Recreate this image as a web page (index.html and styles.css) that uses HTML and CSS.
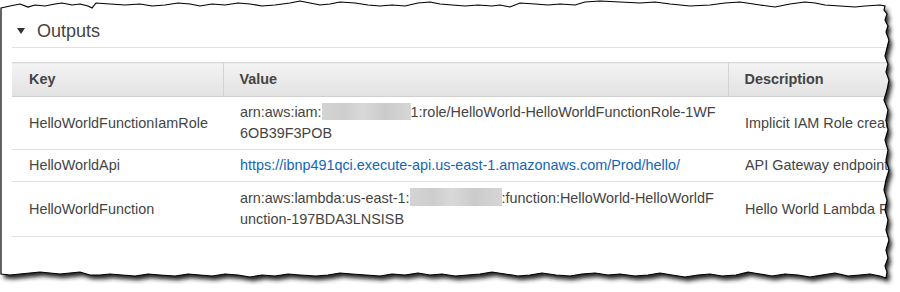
FILE: index.html
```html
<!DOCTYPE html>
<html lang="en">
<head>
<meta charset="utf-8">
<title>Outputs</title>
<link rel="stylesheet" href="styles.css">
</head>
<body>
<div class="paper">
  <section class="panel">
    <h2 class="title"><span class="caret"></span>Outputs</h2>
    <table class="outputs">
      <colgroup>
        <col class="c-key">
        <col class="c-value">
        <col class="c-desc">
      </colgroup>
      <thead>
        <tr><th>Key</th><th>Value</th><th>Description</th></tr>
      </thead>
      <tbody>
        <tr>
          <td>HelloWorldFunctionIamRole</td>
          <td class="val">arn:aws:iam:<span class="redact r1"></span>1:role/HelloWorld-HelloWorldFunctionRole-1WF6OB39F3POB</td>
          <td class="desc">Implicit IAM Role created for Hello World function</td>
        </tr>
        <tr>
          <td>HelloWorldApi</td>
          <td class="val"><a class="link" href="#">https://ibnp491qci.execute-api.us-east-1.amazonaws.com/Prod/hello/</a></td>
          <td class="desc">API Gateway endpoint URL for Prod stage for Hello World function</td>
        </tr>
        <tr>
          <td>HelloWorldFunction</td>
          <td class="val">arn:aws:lambda:us-east-1:<span class="redact r2"></span>:function:HelloWorld-HelloWorldFunction-197BDA3LNSISB</td>
          <td class="desc">Hello World Lambda Function ARN</td>
        </tr>
      </tbody>
    </table>
  </section>
  <svg class="edge" width="900" height="292" viewBox="0 0 900 292" aria-hidden="true">
    <defs>
      <path id="paperShape" d="M1 8 L10 6 L20 4 L28 7 L35 5 L45 6 L55 4 L62 3 L72 5 L80 4 L88 6 L92 8 L96 3 L110 4 L125 5 L140 4 L152 6 L165 5 L178 3 L190 4 L200 6 L212 4 L225 5 L238 3 L250 4 L262 6 L275 5 L290 3 L300 1 L310 3 L320 5 L330 4 L340 2 L355 3 L368 5 L380 6 L392 5 L405 6 L418 3 L430 2 L440 4 L452 5 L465 6 L478 5 L492 6 L500 5 L510 7 L520 3 L535 4 L548 5 L560 4 L575 5 L585 2 L600 1 L620 2 L640 3 L655 2 L670 4 L690 6 L710 5 L725 3 L740 2 L760 5 L775 7 L790 4 L805 2 L815 3 L825 5 L840 6 L855 7 L865 6 L880 5 L885 6 L884 10 L887 14 L885 20 L888 26 L886 32 L889 40 L887 48 L885 56 L888 64 L886 72 L889 80 L887 90 L884 100 L888 110 L886 120 L888 130 L885 140 L888 150 L886 160 L889 170 L886 180 L884 190 L887 200 L885 210 L888 220 L886 230 L889 240 L886 250 L888 258 L885 266 L887 272 L886 278 L880 276 L870 274 L860 275 L848 276 L835 273 L822 275 L810 277 L798 275 L785 274 L772 276 L760 274 L748 272 L736 275 L722 276 L710 274 L698 275 L685 277 L672 275 L660 273 L648 275 L635 276 L620 274 L608 275 L595 273 L582 274 L570 276 L556 275 L542 273 L530 275 L518 276 L505 274 L492 272 L480 274 L468 275 L455 276 L442 274 L430 275 L418 273 L405 275 L392 274 L380 276 L366 275 L352 274 L340 273 L328 275 L316 276 L300 275 L288 274 L275 276 L262 275 L250 277 L238 275 L225 274 L212 276 L200 275 L188 274 L175 276 L160 275 L148 274 L135 276 L122 275 L110 274 L100 275 L90 275 L80 272 L70 273 L60 274 L50 273 L40 272 L30 273 L20 274 L10 275 L1 274 Z"/>
      <mask id="outside" maskUnits="userSpaceOnUse" x="0" y="0" width="900" height="292">
        <rect x="0" y="0" width="900" height="292" fill="#fff"/>
        <use href="#paperShape" fill="#000"/>
      </mask>
      <filter id="blur" x="-10%" y="-10%" width="120%" height="120%">
        <feGaussianBlur stdDeviation="2.2"/>
      </filter>
    </defs>
    <rect x="0" y="0" width="900" height="292" fill="#fff" mask="url(#outside)"/>
    <g mask="url(#outside)">
      <use href="#paperShape" fill="#222" transform="translate(3 4)" filter="url(#blur)"/>
    </g>
    <use href="#paperShape" fill="none" stroke="#000" stroke-width="1.2"/>
  </svg>
</div>
</body>
</html>
```

FILE: styles.css
```css
html, body {
  margin: 0;
  padding: 0;
  background: #fff;
}

body {
  font-family: "Liberation Sans", Arial, sans-serif;
  color: #444;
}

.paper {
  position: relative;
  width: 900px;
  height: 292px;
  overflow: hidden;
  background: #fff;
}

.panel {
  width: 1000px;
  padding: 20px 0 0 12px;
}

.title {
  margin: 0;
  display: flex;
  align-items: center;
  gap: 12px;
  padding: 0 0 5px 5px;
  font-size: 18px;
  line-height: 22px;
  font-weight: normal;
  color: #444;
  border-bottom: 1px solid #e1e1e1;
}

.caret {
  width: 0;
  height: 0;
  border-left: 4px solid transparent;
  border-right: 4px solid transparent;
  border-top: 6px solid #333;
}

.outputs {
  margin-top: 14px;
  width: 988px;
  border-collapse: collapse;
  table-layout: fixed;
  font-size: 14.4px;
  line-height: 21px;
}

.c-key { width: 211px; }
.c-value { width: 505px; }
.c-desc { width: 272px; }

.outputs th {
  text-align: left;
  font-weight: bold;
  color: #444;
  padding: 6px 4px 6px 17px;
  background: linear-gradient(#f3f3f3, #e2e2e2);
  border-top: 1px solid #dadada;
  border-bottom: 1px solid #cfcfcf;
}

.outputs th + th {
  border-left: 1px solid #d3d3d3;
  padding-left: 16px;
}

.outputs td {
  padding: 5px 2px 5px 17px;
  vertical-align: middle;
  border-bottom: 1px solid #e1e1e1;
  color: #444;
}

.outputs tbody tr:last-child td {
  padding-top: 6px;
  padding-bottom: 6px;
}

.outputs td.val {
  word-break: break-all;
  padding-right: 11px;
}

.outputs td.desc {
  white-space: nowrap;
  padding-left: 17px;
}

.link {
  color: #1166bb;
  text-decoration: none;
}

.redact {
  display: inline-block;
  height: 17px;
  vertical-align: -3px;
  background: linear-gradient(90deg, #d4d4d4 0%, #cdcdcd 25%, #d9d9d9 45%, #cbcbcb 70%, #d6d6d6 100%);
  filter: blur(0.6px);
}

.r1 { width: 89px; }
.r2 { width: 92px; height: 18px; }

.edge {
  position: absolute;
  left: 0;
  top: 0;
  pointer-events: none;
}
```
